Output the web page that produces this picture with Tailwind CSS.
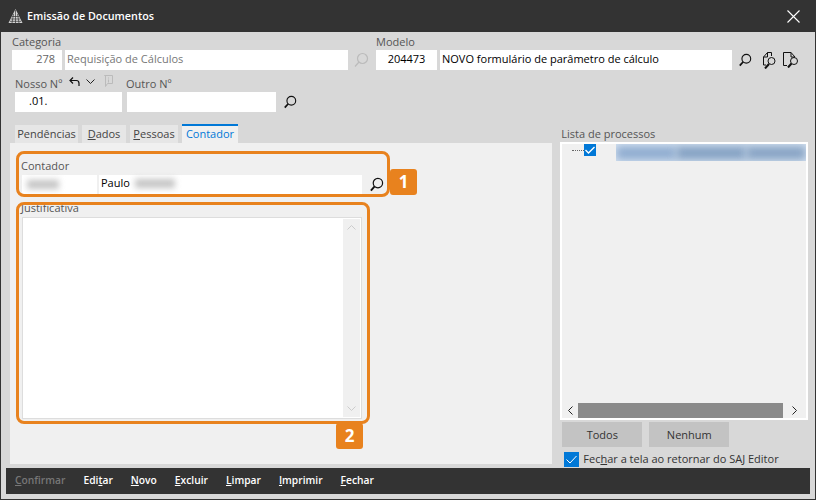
<!DOCTYPE html>
<html lang="pt-BR">
<head>
<meta charset="utf-8">
<title>Emissão de Documentos</title>
<script src="https://cdn.jsdelivr.net/npm/@tailwindcss/browser@4"></script>
</head>
<body class="bg-[#333333]">
<div class="relative w-[816px] h-[500px] overflow-hidden flex flex-col bg-[#d8d8d8] border-x border-b border-[#333333] font-['Open_Sans',sans-serif] text-[11px] text-[#222222]">

  <!-- Title bar -->
  <div class="h-[32px] shrink-0 -mx-px bg-[#333333] flex items-center pl-[8px] pr-[16px] text-white">
    <svg class="w-[15px] h-[14px]" viewBox="0 0 15 14">
      <path d="M7.5 0 14.5 14H.5Z" fill="#d4d4d4"/>
      <path d="M7.5 1v13M5.5 5l-1.5 9M9.5 5l1.5 9M4 7.5h7M3 10h9M2 12.3h11" stroke="#333333" stroke-width=".7" fill="none"/>
    </svg>
    <span class="ml-[4px] mt-[1px] font-semibold text-[10.75px]">Emissão de Documentos</span>
    <svg class="ml-auto w-[13px] h-[13px]" viewBox="0 0 13 13" stroke="#fff" stroke-width="1.1"><path d="M.5.5l12 12M12.5.5l-12 12"/></svg>
  </div>

  <!-- Header fields -->
  <div class="h-[92px] shrink-0 pt-[4px]">
    <div class="flex pl-[11px]">
      <div class="w-[364px]">
        <div class="h-[14px] leading-[12px] text-[#555555]">Categoria</div>
        <div class="flex items-center gap-[3px]">
          <div class="w-[50px] h-[20px] bg-white text-right pr-[7px] leading-[18px] text-[#666666]">278</div>
          <div class="w-[283px] h-[20px] bg-white pl-[2px] leading-[18px] text-[#777777]">Requisição de Cálculos</div>
          <svg class="ml-[2px] w-[16px] h-[16px]" viewBox="0 0 16 16" fill="none" stroke="#bbbbbb" stroke-width="1.2"><circle cx="9.5" cy="6.5" r="5"/><path d="M6 10l-4 4.5"/></svg>
        </div>
      </div>
      <div>
        <div class="h-[14px] leading-[12px] text-[#555555]">Modelo</div>
        <div class="flex items-center">
          <div class="w-[61px] h-[20px] bg-white text-center leading-[18px] text-black">204473</div>
          <div class="ml-[3px] w-[292px] h-[20px] bg-white pl-[2px] leading-[18px] text-black">NOVO formulário de parâmetro de cálculo</div>
          <svg class="ml-[6px] w-[14px] h-[14px]" viewBox="0 0 16 16" fill="none" stroke="#111111" stroke-width="1.3"><circle cx="9.5" cy="6.5" r="5"/><path d="M6 10l-4 4.5" stroke-width="2"/></svg>
          <svg class="ml-[9px] w-[15px] h-[17px]" viewBox="0 0 15 17" fill="none" stroke="#111111"><path d="M2.5 5 6.5.5H10.5V4M6.5.5V5H2.500V13H5"/><circle cx="10.500" cy="9" r="3.500"/><path d="M8 12l-4 4.500" stroke-width="2"/></svg>
          <svg class="ml-[7px] w-[16px] h-[16px]" viewBox="0 0 16 16" fill="none" stroke="#111111"><path d="M8 5V.5H.5V13.500H4M8 .5l4 4.500H8"/><circle cx="11" cy="9" r="3.500"/><path d="M8.500 11.500l-3.500 4" stroke-width="2"/></svg>
        </div>
      </div>
    </div>
    <div class="flex pl-[14px] mt-[8px]">
      <div class="w-[112px]">
        <div class="relative h-[14px] leading-[12px] text-[#555555]">
          Nosso Nº
          <svg class="absolute left-[54px] -top-[1px] w-[11px] h-[9px]" viewBox="0 0 11 9" fill="none" stroke="#111111" stroke-width="1.2"><path d="M4 .5L1 3.500l3 3M1 3.500h6.500Q10 3.500 10 6.500V9"/></svg>
          <svg class="absolute left-[71px] top-[1px] w-[9px] h-[5px]" viewBox="0 0 9 5" fill="none" stroke="#222222"><path d="M.5.5l4 4 4-4"/></svg>
          <svg class="absolute left-[89px] -top-[3px] w-[9px] h-[12px]" viewBox="0 0 9 12" fill="none" stroke="#bbbbbb"><path d="M.5.5h8v8h-5l-2 3V.5Z"/><path d="M4.500 2.500v1M4.500 4.500v3"/></svg>
        </div>
        <div class="w-[107px] h-[20px] bg-white pl-[14px] leading-[18px] text-black">.01.</div>
      </div>
      <div>
        <div class="-ml-px h-[14px] leading-[12px] text-[#555555]">Outro Nº</div>
        <div class="flex items-center">
          <div class="w-[149px] h-[20px] bg-white"></div>
          <svg class="ml-[7px] w-[14px] h-[14px]" viewBox="0 0 16 16" fill="none" stroke="#111111" stroke-width="1.3"><circle cx="9.5" cy="6.5" r="5"/><path d="M6 10l-4 4.5" stroke-width="2"/></svg>
        </div>
      </div>
    </div>
  </div>

  <!-- Main area -->
  <div class="flex flex-1 min-h-0 pl-[9px] pr-[7px]">

    <!-- Tabs and panel -->
    <div class="w-[543px] flex flex-col h-[340px]">
      <div class="flex h-[19px] shrink-0 pl-[5px] items-end gap-[4px]">
        <div class="w-[63px] h-[18px] bg-[#e6e6e6] text-center leading-[18px] text-[#444444]">Pendências</div>
        <div class="w-[44px] h-[18px] bg-[#e6e6e6] text-center leading-[18px] text-[#444444]"><span class="underline">D</span>ados</div>
        <div class="w-[48px] h-[18px] bg-[#e6e6e6] text-center leading-[18px] text-[#444444]"><span class="underline">P</span>essoas</div>
        <div class="w-[56px] h-[19px] bg-[#f0f0f0] border-t-2 border-[#0078d7] text-center leading-[15px] text-[#0078d7]">Contador</div>
      </div>
      <div class="flex-1 bg-[#f0f0f0] pl-[12px] pt-[17px]">
        <div class="h-[14px] leading-[12px] text-[#555555] -ml-px">Contador</div>
        <div class="flex items-center mt-[1px] gap-[2px]">
          <div class="w-[75px] h-[19px] bg-white flex items-center pl-[5px]"><span class="w-[32px] h-[9px] bg-[#c4c4c4] blur-[3px]"></span></div>
          <div class="w-[263px] h-[19px] bg-white pl-[2px] pb-[2px] text-black flex items-center">Paulo<span class="ml-[5px] w-[40px] h-[9px] bg-[#c4c4c4] blur-[3px]"></span></div>
          <svg class="ml-[5px] w-[15px] h-[15px]" viewBox="0 0 16 16" fill="none" stroke="#111111" stroke-width="1.3"><circle cx="9.5" cy="6.5" r="5"/><path d="M6 10l-4 4.5" stroke-width="2"/></svg>
        </div>
        <div class="h-[14px] leading-[12px] text-[#555555] mt-[8px] -ml-px">Justificativa</div>
        <div class="w-[340px] h-[202px] mt-[1px] bg-white border border-[#dddddd] flex justify-end p-px">
          <div class="w-[17px] bg-[#f0f0f0] flex flex-col justify-between items-center py-[6px]">
            <svg class="w-[9px] h-[5px]" viewBox="0 0 9 5" fill="none" stroke="#cccccc"><path d="M.5 4.500l4-4 4 4"/></svg>
            <svg class="w-[9px] h-[5px]" viewBox="0 0 9 5" fill="none" stroke="#cccccc"><path d="M.5.5l4 4 4-4"/></svg>
          </div>
        </div>
      </div>
    </div>

    <!-- Process list -->
    <div class="ml-[8px] w-[248px] flex flex-col">
      <div class="h-[15px] leading-[13px] text-[#555555] pl-px mt-[3px]">Lista de processos</div>
      <div class="h-[278px] bg-white p-[2px] flex flex-col">
        <div class="flex-1 bg-[#f0f0f0] flex items-start">
          <div class="flex items-center h-[12px] w-[54px] pl-[10px]">
            <span class="w-[12px] border-t border-dotted border-[#666666]"></span>
            <span class="w-[12px] h-[12px] bg-[#0078d7] flex items-center justify-center">
              <svg class="w-[10px] h-[8px]" viewBox="0 0 10 8" fill="none" stroke="#fff" stroke-width="1.4"><path d="M.5 4l3 3 6-6"/></svg>
            </span>
          </div>
          <div class="flex-1 h-[17px] bg-[#d9e5f2] overflow-hidden flex items-center">
            <div class="w-[60px] h-[14px] bg-[#8facd0] blur-[4px]"></div>
            <div class="w-[70px] h-[14px] bg-[#84a1c3] blur-[4px]"></div>
            <div class="flex-1 h-[14px] bg-[#87a3c4] blur-[4px]"></div>
          </div>
        </div>
        <div class="h-[15px] bg-[#f0f0f0] flex items-center">
          <div class="w-[16px] flex justify-center"><svg class="w-[5px] h-[9px]" viewBox="0 0 5 9" fill="none" stroke="#222222"><path d="M4.500.5l-4 4 4 4"/></svg></div>
          <div class="w-[205px] h-full bg-[#8a8a8a]"></div>
          <div class="flex-1 flex justify-center"><svg class="w-[5px] h-[9px]" viewBox="0 0 5 9" fill="none" stroke="#222222"><path d="M.5.5l4 4-4 4"/></svg></div>
        </div>
      </div>
      <div class="flex gap-[7px] pl-[2px] mt-[2px]">
        <div class="w-[80px] h-[25px] bg-[#c3c3c3] text-center leading-[25px] text-[#333333]">Todos</div>
        <div class="w-[80px] h-[25px] bg-[#c3c3c3] text-center leading-[25px] text-[#333333]">Nenhum</div>
      </div>
      <div class="flex items-center pl-[4px] mt-[4px]">
        <span class="w-[15px] h-[15px] bg-[#0078d7] flex items-center justify-center">
          <svg class="w-[11px] h-[9px]" viewBox="0 0 11 9" fill="none" stroke="#fff"><path d="M.5 4.500l3.500 3.500 6.500-7"/></svg>
        </span>
        <span class="ml-[4px] text-[#333333]">Fec<span class="underline">h</span>ar a tela ao retornar do SAJ Editor</span>
      </div>
    </div>
  </div>

  <!-- Bottom action bar -->
  <div class="absolute left-[5px] top-[468px] w-[804px] h-[26px] bg-[#333333] flex items-center pl-[9px] gap-[18px] text-white font-semibold text-[10.25px]">
    <span class="text-[#777777]"><span class="underline">C</span>onfirmar</span>
    <span>Edi<span class="underline">t</span>ar</span>
    <span><span class="underline">N</span>ovo</span>
    <span><span class="underline">E</span>xcluir</span>
    <span><span class="underline">L</span>impar</span>
    <span><span class="underline">I</span>mprimir</span>
    <span><span class="underline">F</span>echar</span>
  </div>

  <!-- Orange callouts -->
  <div class="absolute left-[15px] top-[151px] w-[374px] h-[46px] border-[3px] border-[#e8821e] rounded-[8px]"></div>
  <div class="absolute left-[389px] top-[169px] w-[27px] h-[26px] bg-[#e8821e] rounded-[3px] text-white font-bold text-[17px] leading-[26px] text-center">1</div>
  <div class="absolute left-[15px] top-[202px] w-[354px] h-[222px] border-[3px] border-[#e8821e] rounded-[8px]"></div>
  <div class="absolute left-[335px] top-[423px] w-[27px] h-[26px] bg-[#e8821e] rounded-[3px] text-white font-bold text-[17px] leading-[26px] text-center">2</div>
</div>
</body>
</html>
